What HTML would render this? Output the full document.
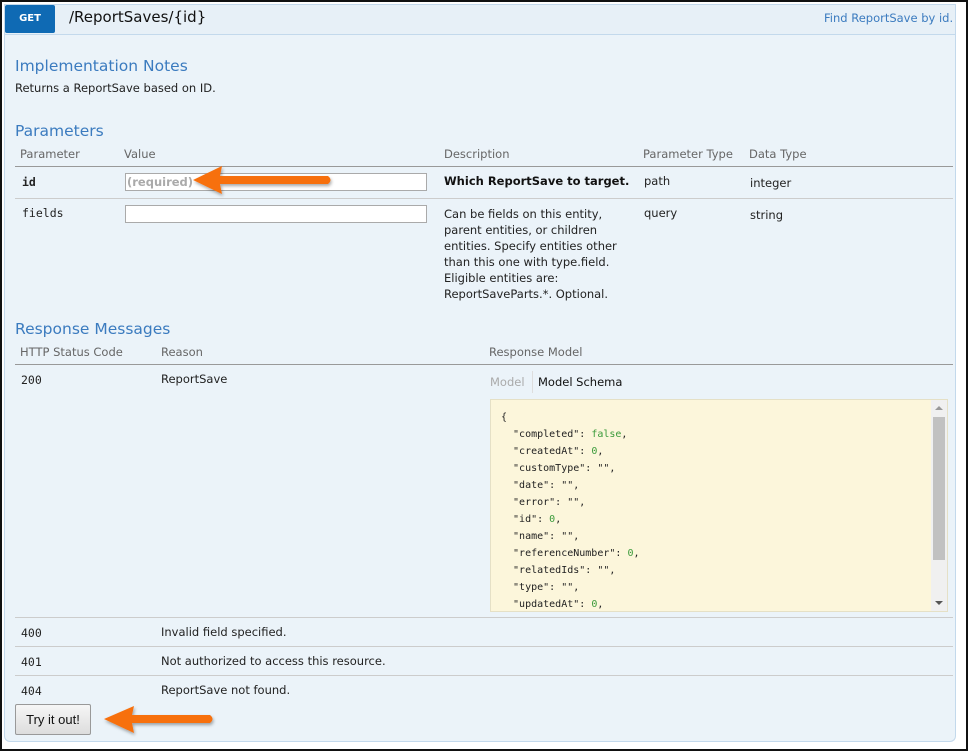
<!DOCTYPE html>
<html><head><style>
body{margin:0;width:968px;height:751px;background:#fff;font-family:"DejaVu Sans",sans-serif;overflow:hidden;position:relative}
.a{position:absolute;white-space:nowrap}
.frame{position:absolute;left:0;top:0;width:964px;height:747px;border:2px solid #111;background:#fff}
.panel{position:absolute;left:4px;top:33px;width:950px;height:708px;background:#ebf3f9;border:1px solid #c3d9ec;border-top:none;border-radius:0 0 6px 6px}
.hdr{position:absolute;left:4px;top:4px;width:950px;height:29px;background:#e7f0f7;border:1px solid #c3d9ec}
.get{position:absolute;left:5px;top:5px;width:50px;height:28px;background:#0f6ab4;color:#fff;font-size:10px;font-weight:bold;text-align:center;line-height:28px;border-radius:2px}
.h{color:#3b7bbf;font-size:15.5px}
.t{font-size:11.5px;color:#222}
.th{font-size:11.5px;color:#666}
.line{position:absolute;height:1px;background:#ccc}
.mono{font-family:"DejaVu Sans Mono",monospace;font-size:11.5px;color:#222}
input{position:absolute;height:18px;border:1px solid #aaa;background:#fff;margin:0;padding:0 2px;box-sizing:border-box}
pre{margin:0;font-family:"DejaVu Sans Mono",monospace;font-size:10px;line-height:17px;color:#222}
.g{color:#3a9a3a}
</style></head><body>
<div class="frame"></div>
<div class="panel"></div>
<div class="hdr"></div>
<div class="get">GET</div>
<div class="a" style="left:69px;top:8px;font-size:15px;color:#111">/ReportSaves/{id}</div>
<div class="a" style="left:824px;top:11px;font-size:11.5px;color:#3b7bbf">Find ReportSave by id.</div>

<div class="a h" style="left:15px;top:57px">Implementation Notes</div>
<div class="a t" style="left:15px;top:81px">Returns a ReportSave based on ID.</div>
<div class="a h" style="left:15px;top:122px">Parameters</div>
<div class="a th" style="left:20px;top:147px">Parameter</div>
<div class="a th" style="left:124px;top:147px">Value</div>
<div class="a th" style="left:444px;top:147px">Description</div>
<div class="a th" style="left:643px;top:147px">Parameter Type</div>
<div class="a th" style="left:749px;top:147px">Data Type</div>
<div class="line" style="left:15px;top:166px;width:938px;background:#999"></div>
<div class="a mono" style="left:22px;top:175px;font-weight:bold">id</div>
<input style="left:125px;top:173px;width:302px">
<div class="a" style="left:127px;top:175px;font-size:11.5px;color:#aaa;font-weight:bold">(required)</div>
<div class="a t" style="left:444px;top:174px;font-weight:bold;color:#111">Which ReportSave to target.</div>
<div class="a t" style="left:644px;top:174px">path</div>
<div class="a t" style="left:750px;top:176px">integer</div>
<div class="line" style="left:15px;top:198px;width:938px"></div>
<div class="a mono" style="left:22px;top:206px">fields</div>
<input style="left:125px;top:205px;width:302px">
<div class="a t" style="left:444px;top:206px;line-height:16px">Can be fields on this entity,<br>parent entities, or children<br>entities. Specify entities other<br>than this one with type.field.<br>Eligible entities are:<br>ReportSaveParts.*. Optional.</div>
<div class="a t" style="left:644px;top:206px">query</div>
<div class="a t" style="left:750px;top:208px">string</div>

<div class="a h" style="left:15px;top:320px">Response Messages</div>
<div class="a th" style="left:20px;top:345px">HTTP Status Code</div>
<div class="a th" style="left:161px;top:345px">Reason</div>
<div class="a th" style="left:489px;top:345px">Response Model</div>
<div class="line" style="left:15px;top:364px;width:938px;background:#999"></div>
<div class="a mono" style="left:21px;top:373px">200</div>
<div class="a t" style="left:161px;top:372px">ReportSave</div>
<div class="a" style="left:490px;top:375px;font-size:11.5px;color:#aaa">Model</div>
<div style="position:absolute;left:532px;top:371px;width:1px;height:22px;background:#ddd"></div>
<div class="a t" style="left:538px;top:375px;color:#111">Model Schema</div>
<div style="position:absolute;left:490px;top:399px;width:456px;height:211px;background:#fcf6db;border:1px solid #e5e0c6;overflow:hidden">
<pre style="position:absolute;left:10px;top:9px">{
  "completed": <span class="g">false</span>,
  "createdAt": <span class="g">0</span>,
  "customType": "",
  "date": "",
  "error": "",
  "id": <span class="g">0</span>,
  "name": "",
  "referenceNumber": <span class="g">0</span>,
  "relatedIds": "",
  "type": "",
  "updatedAt": <span class="g">0</span>,</pre>
<div style="position:absolute;right:0;top:0;width:16px;height:211px;background:#f0f0f0"></div>
<div style="position:absolute;right:2px;top:17px;width:12px;height:143px;background:#c1c1c1"></div>
<div style="position:absolute;right:4px;top:6px;border:4px solid transparent;border-bottom:4px solid #999;border-top:none"></div>
<div style="position:absolute;right:4px;bottom:6px;border:4px solid transparent;border-top:4px solid #555;border-bottom:none"></div>
</div>
<div class="line" style="left:15px;top:617px;width:938px"></div>
<div class="a mono" style="left:21px;top:626px">400</div>
<div class="a t" style="left:161px;top:625px">Invalid field specified.</div>
<div class="line" style="left:15px;top:646px;width:938px"></div>
<div class="a mono" style="left:21px;top:655px">401</div>
<div class="a t" style="left:161px;top:654px">Not authorized to access this resource.</div>
<div class="line" style="left:15px;top:675px;width:938px"></div>
<div class="a mono" style="left:21px;top:684px">404</div>
<div class="a t" style="left:161px;top:683px">ReportSave not found.</div>
<div style="position:absolute;left:15px;top:704px;width:74px;height:29px;border:1px solid #999;border-radius:2px;background:linear-gradient(#f6f6f6,#ddd);font-family:'Liberation Sans',sans-serif;font-size:13px;color:#111;text-align:center;line-height:29px">Try it out!</div>

<svg style="position:absolute;left:0;top:0" width="968" height="751">
<defs><filter id="s"><feDropShadow dx="1" dy="2" stdDeviation="1.5" flood-opacity="0.35"/></filter></defs>
<g filter="url(#s)" fill="#f7700e">
<path d="M193 180 L222 166 L220 176 L328 176 Q333 180 328 184 L220 184 L222 194 Z"/>
<path d="M104 719 L134 706 L132 715 L210 715 Q215 719 210 723 L132 723 L134 733 Z"/>
</g>
</svg>
</body></html>
